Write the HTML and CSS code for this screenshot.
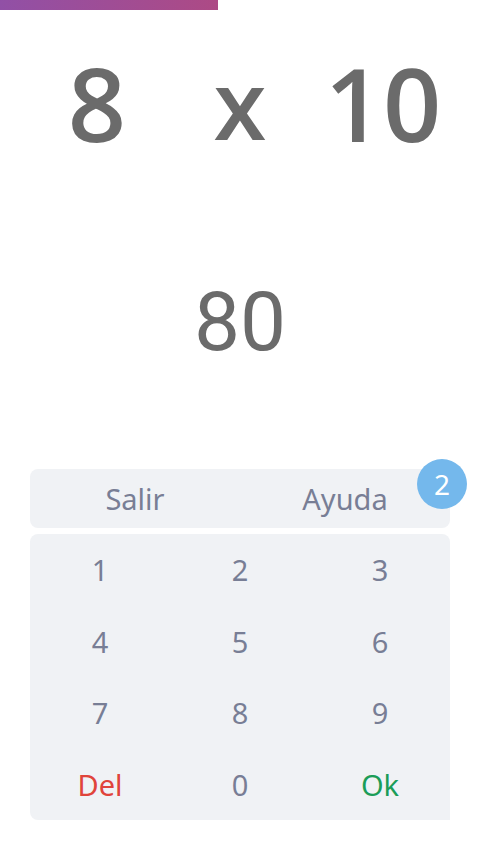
FILE: index.html
```html
<!DOCTYPE html>
<html lang="es">
<head>
<meta charset="utf-8">
<title>Tablas</title>
<link rel="stylesheet" href="styles.css">
</head>
<body>
<div class="progress"><div class="progress-fill" style="width:45.4%"></div></div>
<div class="question">
  <span class="q-num">8</span>
  <span class="q-op">x</span>
  <span class="q-num">10</span>
</div>
<div class="answer">80</div>
<div class="panel">
  <div class="actions">
    <button class="action">Salir</button>
    <button class="action">Ayuda</button>
    <span class="badge">2</span>
  </div>
  <div class="keypad">
    <button class="key">1</button>
    <button class="key">2</button>
    <button class="key">3</button>
    <button class="key">4</button>
    <button class="key">5</button>
    <button class="key">6</button>
    <button class="key">7</button>
    <button class="key">8</button>
    <button class="key">9</button>
    <button class="key key-del">Del</button>
    <button class="key">0</button>
    <button class="key key-ok">Ok</button>
  </div>
</div>
</body>
</html>
```
FILE: styles.css
```css
html, body {
  margin: 0;
  padding: 0;
  background: #ffffff;
}
body {
  width: 480px;
  height: 854px;
  font-family: "Comic Sans MS", "Noto Sans", sans-serif;
}
.progress {
  height: 10px;
  width: 100%;
}
.progress-fill {
  height: 100%;
  background: linear-gradient(90deg, #9150a6, #ad4a85);
}
.question {
  height: 186px;
  display: grid;
  grid-template-columns: 194px 92px 194px;
  align-items: center;
  color: #6b6b6b;
  font-family: "Comic Sans MS", "Open Sans", "Noto Sans", sans-serif;
  font-weight: 600;
  font-size: 102px;
  line-height: 1;
}
.question .q-num, .question .q-op {
  text-align: center;
}
.question .q-op {
  font-size: 96px;
}
.answer {
  height: 252px;
  display: flex;
  align-items: center;
  justify-content: center;
  font-family: Roboto, "Liberation Sans", sans-serif;
  font-size: 82px;
  color: #6b6b6b;
}
.panel {
  margin: 21px 30px 0;
  display: flex;
  flex-direction: column;
  gap: 6px;
}
.actions {
  position: relative;
  height: 59px;
  background: #f0f2f5;
  border-radius: 8px;
  display: grid;
  grid-template-columns: 1fr 1fr;
}
button {
  border: 0;
  background: none;
  padding: 0;
  margin: 0;
  font-family: "Comic Sans MS", "Noto Sans", sans-serif;
  color: #787e95;
  cursor: pointer;
}
.action {
  font-size: 29px;
}
.badge {
  position: absolute;
  left: 387px;
  top: -10px;
  width: 50px;
  height: 50px;
  border-radius: 50%;
  background: #74b8ec;
  color: #ffffff;
  font-size: 28px;
  display: flex;
  align-items: center;
  justify-content: center;
}
.keypad {
  height: 286px;
  background: #f0f2f5;
  border-radius: 8px 8px 0 8px;
  display: grid;
  grid-template-columns: repeat(3, 1fr);
  grid-template-rows: repeat(4, 1fr);
}
.key {
  font-size: 29px;
}
.key-del {
  color: #e0443b;
}
.key-ok {
  color: #1b9d58;
}
```
